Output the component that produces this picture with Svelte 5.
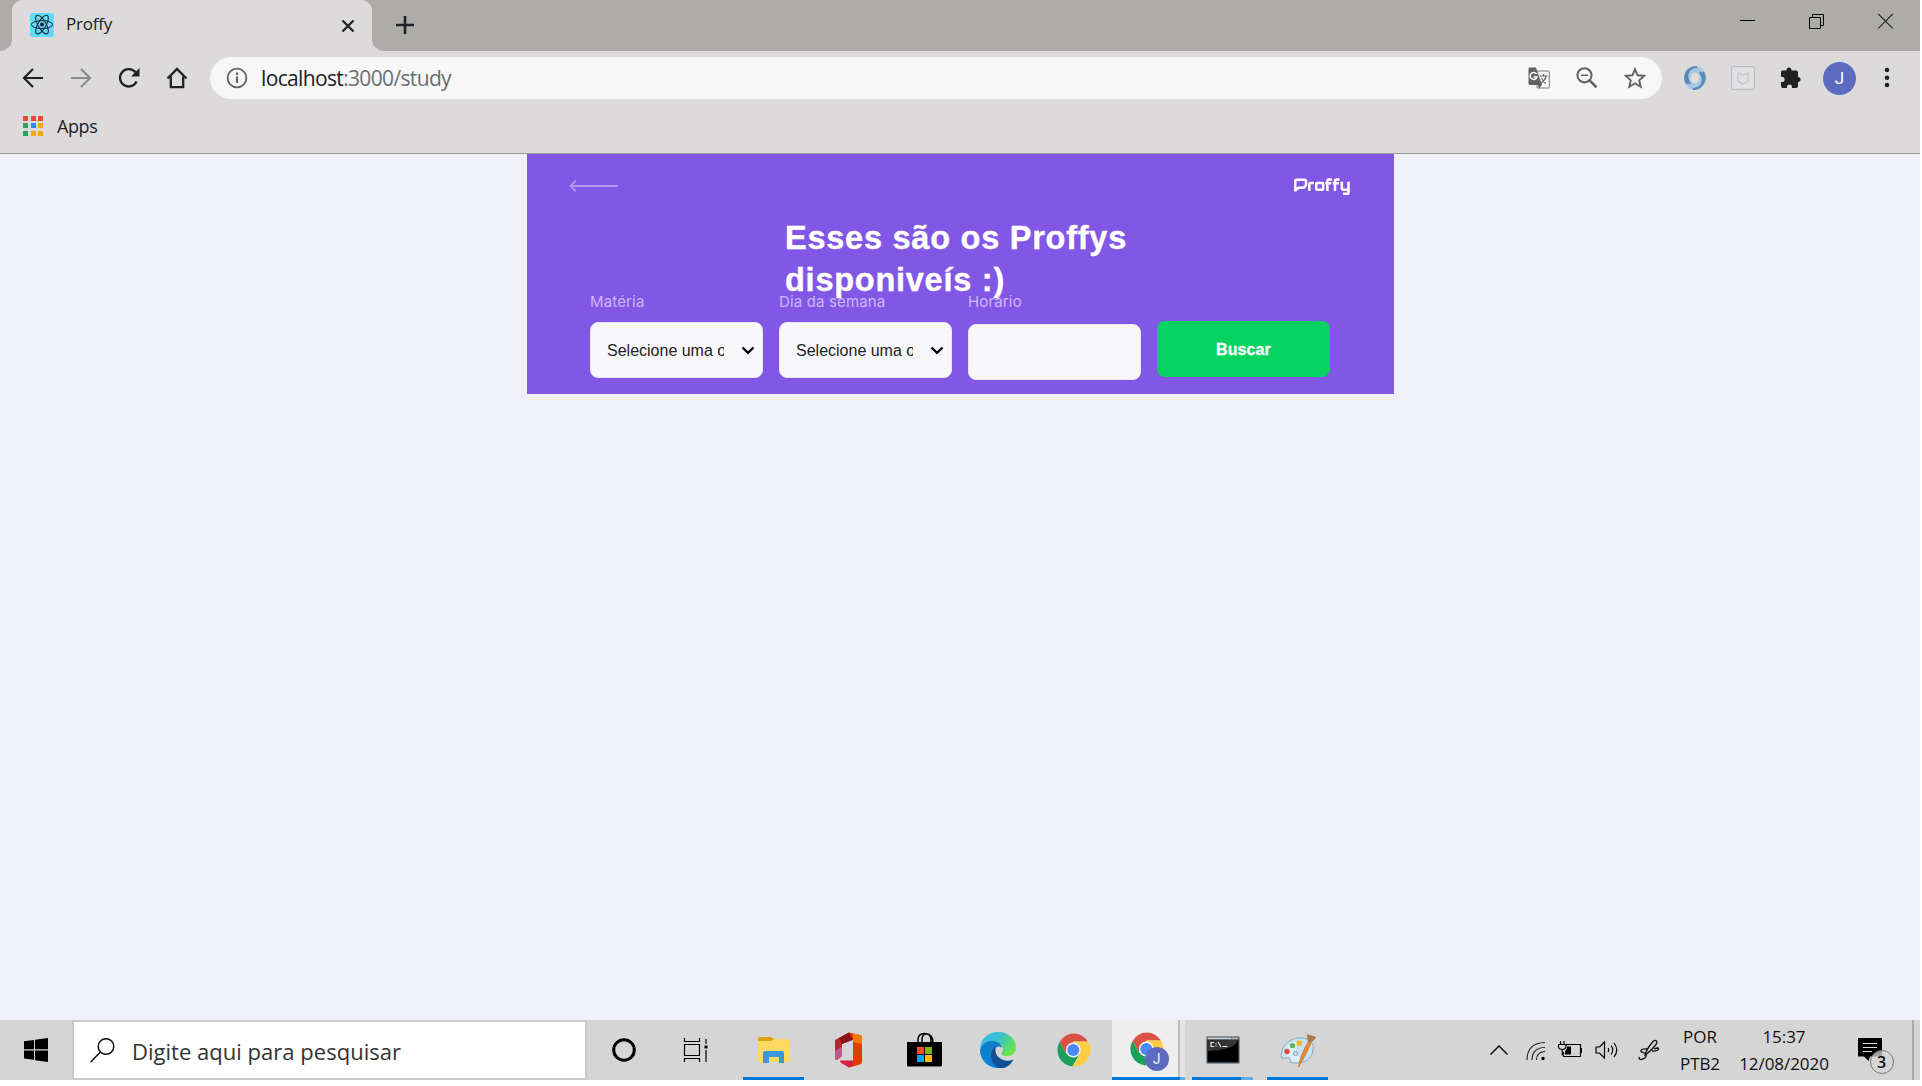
<script>
  const petals = [0, 60, 120];
  const appDots = ['#f44336', '#f44336', '#f44336', '#34a05c', '#2d8cf0', '#f5a90f', '#34a05c', '#f5a90f', '#f5a90f'];
  const selects = [
    { id: 'subject', label: 'Matéria' },
    { id: 'weekday', label: 'Dia da semana' }
  ];
</script>

{#snippet chromeLogo()}
  <path d="M4.7 9.7A16.5 16.5 0 0 1 33 9.5H18.5L11 21.5Z" fill="#dd5246" />
  <path d="M4.7 9.7 A16.5 16.5 0 0 0 17.5 34.5 L24.6 22 L18 24 L11 21.5Z" fill="#1b9f5d" />
  <path d="M33 9.5A16.5 16.5 0 0 1 17.5 34.5L25.2 21.5L18.5 9.5Z" fill="#ffcd41" />
  <circle cx="18.3" cy="18" r="7.5" fill="#f3f3f3" />
  <circle cx="18.3" cy="18" r="6" fill="#4a8af4" />
{/snippet}

<div class="screen">
  <header class="tabs">
    <div class="corner left"><i></i></div>
    <div class="tab">
      <svg class="favicon" width="24" height="24" viewBox="0 0 24 24">
        <rect width="24" height="24" rx="2" fill="#61dafb" />
        <g fill="none" stroke="#15222b" stroke-width="1">
          {#each petals as angle}
            <ellipse cx="12" cy="11.6" rx="10.6" ry="4" transform="rotate({angle} 12 11.6)" />
          {/each}
        </g>
        <circle cx="12" cy="11.6" r="2" fill="#15222b" />
      </svg>
      <span class="tab-title">Proffy</span>
      <svg class="tab-close" width="14" height="14" viewBox="0 0 14 14"><path d="M1.5 1.5l11 11M12.5 1.5l-11 11" stroke="#202124" stroke-width="2.3" /></svg>
    </div>
    <div class="corner right"><i></i></div>
    <svg class="new-tab" width="18" height="18" viewBox="0 0 18 18"><path d="M9 0v18M0 9h18" stroke="#202124" stroke-width="2.6" /></svg>
    <div class="window-buttons">
      <svg width="15" height="16" viewBox="0 0 15 16"><path d="M0 7.5h15" stroke="#000" /></svg>
      <svg width="15" height="16" viewBox="0 0 15 16"><path d="M.5 4.5h11v11h-11zM3.5 4V1.5h11v11H12" fill="none" stroke="#000" /></svg>
      <svg width="15" height="16" viewBox="0 0 15 16"><path d="M.3 1l14.4 14.4M14.7 1L.3 15.4" stroke="#222" stroke-width="1.1" /></svg>
    </div>
  </header>

  <nav class="toolbar">
    <svg width="22" height="22" viewBox="0 0 22 22"><path d="M21 11H2.5M11 2L2 11l9 9" fill="none" stroke="#202124" stroke-width="2.2" /></svg>
    <svg width="22" height="22" viewBox="0 0 22 22"><path d="M1 11h18.5M11 2l9 9-9 9" fill="none" stroke="#8d8c8d" stroke-width="2.2" /></svg>
    <svg width="22" height="22" viewBox="0 0 22 22"><path d="M18.6 14.5A8.7 8.7 0 1 1 17.5 5.3" fill="none" stroke="#202124" stroke-width="2.3" /><path d="M21.5 1v8.5H13z" fill="#202124" /></svg>
    <svg width="22" height="22" viewBox="0 0 22 22"><path d="M1.500 11.5L11 2l9.5 9.5M4.8 9.5v10.7h12.4V9.5" fill="none" stroke="#202124" stroke-width="2.3" /></svg>
    <div class="omnibox">
      <svg width="22" height="22" viewBox="0 0 22 22"><circle cx="11" cy="11" r="9.4" fill="none" stroke="#5f6368" stroke-width="1.8" /><path d="M11 9.5V16M11 5.500V8" stroke="#5f6368" stroke-width="2.2" /></svg>
      <span class="url">localhost<em>:3000/study</em></span>
      <div class="omni-actions">
        <svg width="22" height="22" viewBox="0 0 22 22">
          <rect x="9" y="4" width="12.3" height="17" rx="1" fill="#f7f7f7" stroke="#777a7d" />
          <path d="M1.500.5H8L14 18H2a1.500 1.500 0 0 1-1.500-1.500V2Q.5.5 1.500.5z" fill="#5f6368" /><path d="M10 18h4l-3 3.500z" fill="#5f6368" />
          <path d="M8.700 7.200A3.500 3.500 0 1 0 9 10H5.500" fill="none" stroke="#fff" stroke-width="1.500" />
          <path d="M11.500 9h8M15.500 7v2M18 9.500q-1 4-5 6.500M13.500 11q2 4 4.500 5.500" fill="none" stroke="#5f6368" stroke-width="1.100" />
        </svg>
        <svg width="22" height="22" viewBox="0 0 22 22"><circle cx="8.500" cy="8.300" r="7.100" fill="none" stroke="#5f6368" stroke-width="2.100" /><path d="M5 8.300h7" stroke="#5f6368" stroke-width="1.500" /><path d="M13.500 13.400l7 6.900" stroke="#5f6368" stroke-width="2.700" /></svg>
        <svg width="22" height="22" viewBox="0 0 22 22"><path d="M11 2.300l2.600 6 6.600.6-5 4.400 1.500 6.400-5.700-3.400-5.700 3.400 1.500-6.400-5-4.400 6.600-.6z" fill="none" stroke="#5f6368" stroke-width="1.900" /></svg>
      </div>
    </div>
    <div class="extensions">
      <svg width="24" height="24" viewBox="0 0 24 24">
        <ellipse cx="12" cy="12" rx="7.800" ry="8.700" fill="none" stroke="#a6c7e3" stroke-width="6.500" />
        <path d="M14 1C5 1 1 10 7 18M6 3Q0 10 4 18" fill="none" stroke="#5988b5" stroke-width="2.200" />
        <path d="M10 23c9 0 13-9 7-17M18 20q6-7 2-14" fill="none" stroke="#5988b5" stroke-width="2.200" />
      </svg>
      <svg width="24" height="24" viewBox="0 0 24 24"><rect x=".6" y=".6" width="22.800" height="22.800" rx="1.500" fill="#e0e1e2" stroke="#acb9bf" /><path d="M7 7l5 2.300L17 7v8l-5 3-5-3z" fill="none" stroke="#c7ced2" stroke-width="1.900" /></svg>
      <svg class="puzzle" width="22" height="22" viewBox="0 0 22 22"><path d="M2 3.500h4.500V3a2.500 2.500 0 0 1 5 0v.5H16q2 0 2 2V10h.8a2.600 2.600 0 0 1 0 5H18v4q0 2-2 2h-4v-1a2.500 2.500 0 0 0-5 0v1H3q-2 0-2-2v-4h1a2.600 2.600 0 0 0 0-5.200H1V5.500q0-2 1-2z" fill="#202124" /></svg>
      <span class="avatar">J</span>
      <svg class="menu" width="6" height="22" viewBox="0 0 6 22"><g fill="#202124"><circle cx="3" cy="3" r="2.300" /><circle cx="3" cy="10.700" r="2.300" /><circle cx="3" cy="18" r="2.300" /></g></svg>
    </div>
  </nav>

  <div class="bookmarks">
    <div class="apps-grid">
      {#each appDots as color}<i style="background: {color}"></i>{/each}
    </div>
    <span>Apps</span>
  </div>

  <main>
    <section class="hero">
      <div class="top-bar">
        <svg class="back" width="50" height="14" viewBox="0 0 50 14"><path d="M1.500 7H49M7 1.500L1.500 7 7 12.500" fill="none" stroke="#b494f3" stroke-width="1.800" /></svg>
        <svg class="logo" width="56" height="18" viewBox="0 0 56 18" aria-label="Proffy">
          <g fill="none" stroke="#fff" stroke-width="2.500">
            <path d="M1.300 13.500V3Q1.300 1.700 2.500 1.700H10.800Q12 1.700 12 3V7.300L9.800 9.700H4.500L1.300 12.500" />
            <path d="M15.300 13V6.200Q15.300 5 16.500 5H20" />
            <rect x="22.200" y="5" width="7" height="6.800" rx="1" />
            <path d="M33.400 13V3Q33.400 1.500 35 1.500H38M31.300 5.300H37.300" />
            <path d="M41 13V3Q41 1.500 42.600 1.500H45.500M38.800 5.300H45" />
            <path d="M47.800 3.800V9.800Q47.800 11.700 49.500 11.700H54M54.500 3.800V14.400Q54.500 15.700 53.300 15.700H49" />
          </g>
        </svg>
      </div>
      <h1>Esses são os Proffys<br />disponiveís :)</h1>
      <form onsubmit={(e) => e.preventDefault()}>
        {#each selects as field}
          <div class="field">
            <label for={field.id}>{field.label}</label>
            <button type="button" class="select" id={field.id}>
              <span>Selecione uma opção</span>
              <svg width="14" height="9" viewBox="0 0 14 9"><path d="M1.500 1.500L7 6.800l5.500-5.300" fill="none" stroke="#000" stroke-width="2.300" /></svg>
            </button>
          </div>
        {/each}
        <div class="field time">
          <label for="time">Horário</label>
          <input id="time" type="text" />
        </div>
        <button class="submit" type="submit">Buscar</button>
      </form>
    </section>
  </main>

  <footer class="taskbar">
    <div class="start">
      <svg width="24" height="24" viewBox="0 0 24 24"><path d="M0 3.300l10-1.400v9.400H0zM11 1.700L24 0v11.300H11zM0 12.400h10v9.400l-10-1.400zM11 12.400h13V24l-13-1.800z" /></svg>
    </div>
    <div class="search">
      <svg width="25" height="25" viewBox="0 0 25 25"><circle cx="16" cy="8.500" r="7.800" fill="none" stroke="#111" stroke-width="1.500" /><path d="M10.500 14L.7 24" stroke="#111" stroke-width="1.600" /></svg>
      <span>Digite aqui para pesquisar</span>
    </div>
    <div class="pinned">
      <div class="cell"><svg width="26" height="26" viewBox="0 0 26 26"><circle cx="13" cy="13" r="10.300" fill="none" stroke="#000" stroke-width="3" /></svg></div>
      <div class="cell taskview"><svg width="25" height="24" viewBox="0 0 25 24"><path d="M1.500 0v3.500h15V0M1.500 6.500h15v11h-15zM1.500 24v-3.500h15V24M23 1v5M23 12v12" fill="none" stroke="#000" stroke-width="1.200" /><rect x="21.500" y="7.500" width="3" height="3" /></svg></div>
      <div class="cell open">
        <svg width="34" height="36" viewBox="0 0 34 36"><path d="M1 7q0-2 2-2h11l3 2v5H1z" fill="#dfa00a" /><path d="M1 9h13l3-2h14q2 0 2 2v19q0 2-2 2H3q-2 0-2-2z" fill="#ffd866" /><path d="M6 31V21q0-2 2-2h17q2 0 2 2v10h-5v-6H12v6z" fill="#3a96dd" /></svg>
      </div>
      <div class="cell">
        <svg width="32" height="36" viewBox="0 0 32 36"><path d="M2 8L16 .5V8l-7 4v12l-5 4q-2 .5-2-2z" fill="#c02235" /><path d="M2 19l7-4v9l-5 4q-2 0-2-2z" fill="#bd5a91" /><path d="M16 .5L6 6l3 6 11-4V2z" fill="#8c1016" /><path d="M16 .5l11 2.500q2 .5 2 3v24q0 2-2 2.500L16 35.500l4-7V8z" fill="#df3d00" /><path d="M20 1.500l7 1.500q2 .5 2 3v6l-9-2z" fill="#f27b00" /><path d="M7 28.500h13V34l-4 1.500-7-4q-2-1-2-3z" fill="#d91f3d" /></svg>
      </div>
      <div class="cell">
        <svg width="36" height="36" viewBox="0 0 36 36"><path d="M12 11V8q0-6.500 6.500-6.500T25 8v3M16 11V8q0-6 4-6.300Q27 2 27 11" fill="none" stroke="#000" stroke-width="1.500" /><path d="M1 10h35v23q0 1.500-1.500 1.500h-32Q1 34.500 1 33z" /><rect x="11" y="15" width="7" height="7" fill="#f25022" /><rect x="19" y="15" width="7" height="7" fill="#7fba00" /><rect x="11" y="23" width="7" height="7" fill="#00a4ef" /><rect x="19" y="23" width="7" height="7" fill="#ffb900" /></svg>
      </div>
      <div class="cell">
        <svg width="36" height="36" viewBox="0 0 36 36">
          <defs>
            <linearGradient id="edge-top" x1="0" y1="0" x2="1" y2=".55"><stop offset="0" stop-color="#35b8ec" /><stop offset=".5" stop-color="#35c1cf" /><stop offset="1" stop-color="#6be54c" /></linearGradient>
            <linearGradient id="edge-side" x1="0" y1="0" x2="0" y2="1"><stop offset="0" stop-color="#1079c4" /><stop offset="1" stop-color="#0a83df" /></linearGradient>
          </defs>
          <path d="M0 18C0 7 8 0 18 0c11 0 18 7.500 18 15 0 6-4 9-8.500 9-5 0-7-1.500-5.500-3.500 3-5-1-11-9-11Q3 9.500 0 18z" fill="url(#edge-top)" />
          <path d="M0 18Q3 9 12 9c7 0 10 4 10 7-5-4-9 1-8 6 1 8 6 12 12 12q-4 2-8 2C8 36 0 28 0 18z" fill="url(#edge-side)" />
          <path d="M16 14.500C9 18 9 31 18 35.500c6 2 12-1 15.500-8q-6 2.500-11.500 0c-6-3-7.500-8-6-13z" fill="#104f96" />
        </svg>
      </div>
      <div class="cell"><svg width="36" height="36" viewBox="0 0 36 36">{@render chromeLogo()}</svg></div>
      <div class="cell active">
        <svg width="40" height="40" viewBox="0 -1 40 40">{@render chromeLogo()}</svg>
        <b class="badge">J</b>
      </div>
      <div class="cell open grouped">
        <svg width="34" height="28" viewBox="0 0 34 28"><rect x=".7" y=".7" width="32.600" height="26.600" rx="1" fill="#000" stroke="#858f98" stroke-width="1.400" /><path d="M1.500 1.500h31v2h-31z" fill="#cbd3dc" /><path d="M25 2h1.500M28 2h1.500M31 2h1.500" stroke="#4b5663" /><path d="M2 4h30q-3 10-30 11z" fill="#343434" /><path d="M8 6.500H5v4h3M10 7.500v1M10 9.500v1M12 6l3 5M16.500 10.500h5" fill="none" stroke="#eee" stroke-width="1.200" /></svg>
      </div>
      <div class="cell open">
        <svg width="36" height="36" viewBox="0 0 36 36"><path d="M1.500 26C0 14 9 6 21 6c9 0 13 5 12 12-1 9-8 13-16 13l-7-.5q2-4-2-4.500-3 0-6.500 0z" fill="#c5e3f4" stroke="#89a8bd" /><path d="M4 23Q6 10 20 8q-9 10 2 20Q16 31 11 29q1-6-7-6z" fill="#e1f2fb" opacity=".8" /><circle cx="7" cy="19.500" r="2.700" fill="#e3492d" /><rect x="10" y="11.500" width="5" height="4.500" rx="1.400" fill="#5bb548" /><rect x="16.500" y="8.500" width="5.500" height="5.500" rx="1.800" fill="#f8b62c" /><circle cx="15.500" cy="21.500" r="2.200" fill="#d3d9dc" stroke="#8ba7b9" /><path d="M28 10l3 1.500Q25 25 18.500 35 20 24 28 10z" fill="#e98a2d" stroke="#b96720" stroke-width=".6" /><path d="M27 2l9 3q-1 3-6 6l-2-1q-1-4-1-8z" fill="#ad7a49" /></svg>
      </div>
    </div>
    <div class="tray">
      <svg width="18" height="10" viewBox="0 0 18 10"><path d="M.5 9.500L9 1l8.500 8.500" fill="none" stroke="#000" stroke-width="1.400" /></svg>
      <svg class="wifi" width="20" height="20" viewBox="0 0 20 20"><g fill="none" stroke="#222" stroke-width="1.100"><path d="M1 19Q1 2 19 1.500M6 19Q6 7 19 6.200M10.500 19Q10.500 11 19 10.500" /></g><circle cx="17" cy="17.500" r="1.700" /></svg>
      <svg class="battery" width="24" height="18" viewBox="0 0 24 18"><path d="M8 3.500h14.500v12h-17V11M23.500 7v5" fill="none" stroke="#000" stroke-width="1.200" /><path d="M9 5.500h4v8H7v-3l2-3z" /><path d="M2.500 0v3M6 0v3M.5 3.500h7.500v3Q7 8.500 4.300 8.500T.5 6.500zM4.300 8.500V14H6" fill="none" stroke="#000" stroke-width="1.200" /></svg>
      <svg class="volume" width="24" height="20" viewBox="0 0 24 20"><path d="M1 7h3.500L9.500 2v16l-5-5H1zM13 8q1.500 2 0 4M16 5.500q3.500 4.500 0 9M19 3q5.500 7 0 14" fill="none" stroke="#000" stroke-width="1.200" /></svg>
      <svg class="pen" width="22" height="22" viewBox="0 0 22 22"><path d="M7 16q1-5 8-13.500 2-2 3.500-.5 1 1.500-.5 3.500Q12 13 7 16zM9 10q-5-.5-6 1.500c-1 2.500 4 1.500 5 3.500 1 3-2 5-5 5.500q-2.500 0-1.500-2.500M16 10q5-2 4.500 0-1 2.500-6.500 2" fill="none" stroke="#111" stroke-width="1.300" /></svg>
      <div class="stack lang"><span>POR</span><span>PTB2</span></div>
      <div class="stack clock"><span>15:37</span><span>12/08/2020</span></div>
      <div class="notify">
        <svg width="24" height="24" viewBox="0 0 24 24"><path d="M0 0h24v18.500H12L10.500 23 6 18.500H0z" /><path d="M5 5.500h14M5 9.500h14M5 13.500h9" stroke="#ddd" stroke-width="1.100" /></svg>
        <b>3</b>
      </div>
      <i class="peek"></i>
    </div>
  </footer>
</div>

<style>
  :global(body) { background: #fff; overflow: hidden; }
  * { box-sizing: border-box; }
  svg { display: block; flex: none; }
  .screen { width: 1920px; height: 1080px; display: flex; flex-direction: column; font-family: "Open Sans", "Noto Sans", sans-serif; color: #202124; background: #f0f0f7; }

  .tabs { height: 51px; flex: none; display: flex; background: #adaca9; }
  .corner { width: 12px; background: #dcdadb; }
  .corner i { display: block; width: 12px; height: 51px; background: #adaca9; }
  .corner.left i { border-bottom-right-radius: 12px; }
  .corner.right i { border-bottom-left-radius: 12px; }
  .tab { width: 360px; display: flex; align-items: center; padding: 0 18px; background: #dcdadb; border-radius: 11px 11px 0 0; }
  .favicon { margin-top: -1px; }
  .tab-title { margin-left: 12px; font-size: 17px; letter-spacing: -.2px; line-height: 24px; margin-top: -3px; }
  .tab-close { margin-left: auto; margin-right: -1px; }
  .new-tab { margin: 16px 0 0 12px; }
  .window-buttons { display: flex; margin: 13px 27px 0 auto; gap: 54px; }

  .toolbar { height: 54px; flex: none; display: flex; align-items: center; gap: 26px; padding-left: 22px; background: #dcdadb; }
  .omnibox { width: 1452px; height: 42px; margin-left: -4px; padding: 0 16px; border-radius: 21px; background: #f7f7f7; display: flex; align-items: center; }
  .url { margin-left: 13px; font-size: 21px; letter-spacing: -.65px; line-height: 28px; }
  .url em { font-style: normal; color: #6b6e71; }
  .omni-actions { display: flex; gap: 26px; margin-left: auto; }
  .extensions { display: flex; align-items: center; gap: 24px; margin-left: -5px; }
  .puzzle { margin-left: 1px; }
  .avatar { width: 33px; height: 33px; border-radius: 50%; background: #5c6bc0; color: #fff; font-size: 17px; line-height: 33px; text-align: center; margin-left: -3px; font-family: Roboto, sans-serif; }
  .menu { margin-left: 4px; }

  .bookmarks { height: 49px; flex: none; display: flex; align-items: center; gap: 14px; padding: 0 0 7px 23px; background: #dcdadb; border-bottom: 1px solid #999; font-size: 18px; letter-spacing: -.4px; }
  .apps-grid { display: grid; grid-template-columns: repeat(3, 5px); grid-auto-rows: 5px; gap: 2.5px; }

  main { height: 866px; flex: none; display: flex; justify-content: center; align-items: flex-start; }
  .hero { width: 867px; height: 240px; margin-left: 1px; background: #8257e5; font-family: "Liberation Sans", Arial, sans-serif; display: flex; flex-direction: column; }
  .top-bar { height: 63px; flex: none; padding: 24px 44px 0 42px; display: flex; justify-content: space-between; align-items: flex-start; }
  .back { margin-top: 1px; }
  h1 { height: 77px; flex: none; margin: 0 0 0 258px; color: #fff; font-size: 32.5px; line-height: 42px; letter-spacing: .75px; font-weight: 700; white-space: nowrap; -webkit-text-stroke: .4px #fff; }
  form { display: grid; grid-template-columns: repeat(4, 173px); gap: 16px; padding-left: 63px; align-items: start; }
  .field { display: flex; flex-direction: column; }
  label { height: 28px; font-family: Inter, sans-serif; font-size: 15px; line-height: 16px; letter-spacing: .15px; color: #d4c2ff; opacity: .9; }
  .select, input { width: 173px; height: 56px; border-radius: 8px; border: 1px solid #e6e6f0; background: #f8f8fc; }
  .select { display: flex; align-items: center; padding: 2px 7px 0 16px; font: 16px "Liberation Sans", sans-serif; color: #222; text-align: left; }
  .select span { width: 117px; overflow: hidden; white-space: nowrap; line-height: 22px; }
  .select svg { margin: -1px 0 0 auto; }
  .time label { height: 30px; }
  .submit { height: 56px; margin-top: 27px; padding: 2px 0 0; border: 0; border-radius: 8px; background: #04d361; color: #fff; font: 700 16px "Liberation Sans", sans-serif; letter-spacing: .1px; -webkit-text-stroke: .3px #fff; }

  .taskbar { height: 60px; flex: none; display: flex; background: #d5d5d5; }
  .start { width: 72px; flex: none; display: flex; align-items: center; justify-content: center; }
  .search { width: 515px; flex: none; border: 2px solid #cbcbcb; background: #fff; display: flex; align-items: center; padding-left: 16px; }
  .search span { margin: 2px 0 0 17px; font-size: 22px; color: #333; letter-spacing: .02px; }
  .pinned { display: flex; }
  .cell { width: 74.8px; height: 60px; flex: none; display: flex; align-items: center; justify-content: center; }
  .taskview { padding-right: 8px; }
  .open { background: linear-gradient(#0078d7, #0078d7) center bottom / 61px 3px no-repeat; }
  .grouped { background: linear-gradient(90deg, #0078d7 0 49px, #66ade8 49px) center bottom / 61px 3px no-repeat; }
  .active { position: relative; background: linear-gradient(90deg, #0078d7 0 68px, #66ade8 68px) 1px bottom / 73px 3px no-repeat, linear-gradient(90deg, #eee 0 66px, #bdbdbd 66px 68px, #e5e5e5 68px 73px, transparent 73px) 1px 0 no-repeat; }
  .badge { position: absolute; left: 34px; top: 27px; width: 24px; height: 24px; border-radius: 50%; background: #5c6bc0; color: #d9dcf3; font: 500 14px/24px Roboto, sans-serif; text-align: center; }
  .tray { margin-left: auto; display: flex; align-items: center; color: #111; }
  .wifi { margin-left: 18px; margin-top: 2px; }
  .battery { margin-left: 12px; }
  .volume { margin-left: 13px; }
  .pen { margin-left: 19px; }
  .stack { display: flex; flex-direction: column; align-items: center; font-size: 17px; line-height: 27px; letter-spacing: -.05px; }
  .lang { width: 50px; margin-left: 15px; }
  .clock { width: 104px; margin-left: 7px; }
  .notify { position: relative; margin-left: 22px; }
  .notify b { position: absolute; left: 11.5px; top: 11.5px; width: 24px; height: 24px; border: 1px solid #777; border-radius: 50%; background: rgba(213, 213, 213, .75); font-size: 16px; line-height: 22px; font-weight: 600; text-align: center; }
  .peek { width: 8px; height: 60px; margin-left: 30px; border-left: 2px solid #aaa; }
</style>
